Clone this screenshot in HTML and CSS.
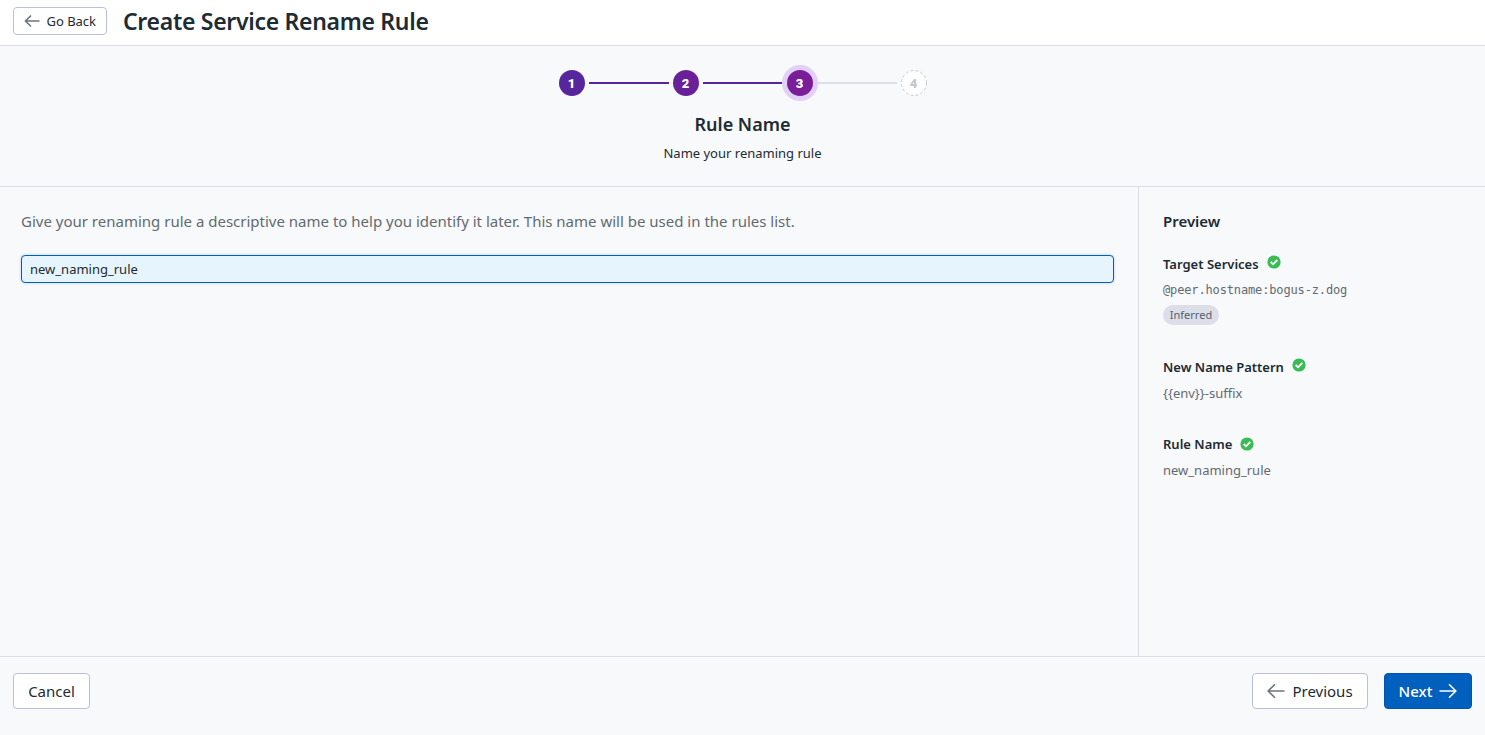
FILE: index.html
```html
<!DOCTYPE html>
<html lang="en">
<head>
<meta charset="utf-8">
<title>Create Service Rename Rule</title>
<link rel="stylesheet" href="styles.css">
</head>
<body>
<header class="topbar">
  <button class="btn btn-small"><svg class="arrow" width="16" height="14" viewBox="0 0 16 14"><path d="M7 1.500 1.500 7 7 12.500M1.500 7h14"/></svg><span>Go Back</span></button>
  <h1 class="title">Create Service Rename Rule</h1>
</header>
<section class="stepper">
  <div class="steps">
    <span class="step step-one">1</span><span class="line"></span>
    <span class="step step-two">2</span><span class="line"></span>
    <span class="step step-current">3</span><span class="line line-pending"></span>
    <span class="step step-pending"><svg class="dash" width="26" height="26" viewBox="0 0 26 26"><circle cx="13" cy="13" r="12.500"/></svg><span class="step-number">4</span></span>
  </div>
  <h2 class="step-title">Rule Name</h2>
  <p class="step-desc">Name your renaming rule</p>
</section>
<main class="content">
  <section class="form">
    <p class="help">Give your renaming rule a descriptive name to help you identify it later. This name will be used in the rules list.</p>
    <input class="field" type="text" value="new_naming_rule">
  </section>
  <aside class="preview">
    <h3 class="preview-title">Preview</h3>
    <div class="item item-target">
      <h4 class="label"><span>Target Services</span><svg class="check check-raised" width="14" height="14" viewBox="0 0 14 14"><circle cx="7" cy="7" r="6.600"/><path d="m3.700 7 2.300 2.300 4.300-4.300"/></svg></h4>
      <p class="value mono">@peer.hostname:bogus-z.dog</p>
      <span class="pill">Inferred</span>
    </div>
    <div class="item item-pattern">
      <h4 class="label"><span>New Name Pattern</span><svg class="check check-raised" width="14" height="14" viewBox="0 0 14 14"><circle cx="7" cy="7" r="6.600"/><path d="m3.700 7 2.300 2.300 4.300-4.300"/></svg></h4>
      <p class="value">{{env}}-suffix</p>
    </div>
    <div class="item">
      <h4 class="label"><span>Rule Name</span><svg class="check" width="14" height="14" viewBox="0 0 14 14"><circle cx="7" cy="7" r="6.600"/><path d="m3.700 7 2.300 2.300 4.300-4.300"/></svg></h4>
      <p class="value">new_naming_rule</p>
    </div>
  </aside>
</main>
<footer class="footer">
  <button class="btn btn-cancel">Cancel</button>
  <div class="nav">
    <button class="btn btn-prev"><svg class="arrow" width="18" height="16" viewBox="0 0 18 16"><path d="M8 1.200 1.200 8 8 14.800M1.200 8h16.300"/></svg><span>Previous</span></button>
    <button class="btn btn-next"><span>Next</span><svg class="arrow" width="18" height="16" viewBox="0 0 18 16"><path d="M10 1.200 16.800 8 10 14.800M16.800 8H.500"/></svg></button>
  </div>
</footer>
</body>
</html>
```
FILE: styles.css
```css
* { box-sizing: border-box; }
body {
  margin: 0;
  height: 735px;
  display: flex;
  flex-direction: column;
  overflow: hidden;
  background: #f8f9fb;
  color: #1c2b34;
  font-family: "Noto Sans", sans-serif;
  font-size: 13px;
  white-space: nowrap;
}
h1, h2, h3, h4, p { margin: 0; }
svg { display: block; flex: none; }
.topbar {
  height: 46px;
  display: flex;
  align-items: flex-start;
  gap: 16px;
  padding: 7px 13px 0;
  background: #fff;
  border-bottom: 1px solid #dcdfe9;
}
.title { font-size: 23px; line-height: 28px; font-weight: 600; letter-spacing: -0.3px; }
.btn {
  display: flex;
  align-items: center;
  justify-content: center;
  height: 36px;
  padding: 0;
  border: 1px solid #bac0dc;
  border-radius: 4px;
  background: #fff;
  color: #1c2b34;
  font: 15px/20px "Noto Sans", sans-serif;
  gap: 7px;
}
.btn-small { width: 94px; height: 28px; font-size: 13px; gap: 6.500px; }
.arrow { fill: none; stroke: #6c757c; stroke-width: 1.6; }
.stepper {
  height: 141px;
  display: flex;
  flex-direction: column;
  align-items: center;
  padding-top: 24px;
  border-bottom: 1px solid #dcdfe9;
}
.steps { display: flex; align-items: center; gap: 4px; }
.step {
  position: relative;
  display: flex;
  align-items: center;
  justify-content: center;
  width: 26px;
  height: 26px;
  padding-top: 1px;
  border-radius: 50%;
  color: #fff;
  font: 900 13px/16px Roboto, sans-serif;
}
.step-one { background: #57259c; }
.step-two { background: #69219a; }
.step-current { background: #791d99; box-shadow: 0 0 0 5px #e3d0f8; }
.step-pending { background: #fff; color: #c5c7ca; }
.step-number { position: relative; }
.dash { position: absolute; left: 0; top: 0; fill: none; stroke: #c8c8cb; stroke-dasharray: 3 2; }
.line { width: 80px; height: 2px; background: #57259c; }
.line-pending { background: #dcdfe9; }
.step-title { margin-top: 15px; font-size: 18px; line-height: 26px; font-weight: 600; }
.step-desc { margin-top: 7px; line-height: 18px; }
.content { flex: 1; display: flex; }
.form { flex: 1; padding: 24px 24px 0 21px; }
.help { font-size: 15px; line-height: 20px; color: #626b71; }
.field {
  display: block;
  width: 100%;
  height: 28px;
  margin-top: 24px;
  padding: 0 8px;
  border: 1px solid #0060b8;
  border-radius: 4px;
  outline: none;
  background: #e6f5fd;
  box-shadow: 0 0 3px rgba(0, 96, 184, .25);
  color: #1c2b34;
  font: 13px/18px "Noto Sans", sans-serif;
}
.preview { width: 347px; padding: 24px 24px 0; border-left: 1px solid #dcdfe9; }
.preview-title { font-size: 15px; line-height: 20px; font-weight: 600; }
.item { margin-bottom: 31px; }
.item-target { margin-top: 23px; margin-bottom: 32px; }
.label { display: flex; align-items: center; gap: 8px; font-size: 13px; line-height: 20px; font-weight: 600; }
.check circle { fill: #38bd55; }
.check path { fill: none; stroke: #fff; stroke-width: 1.8; }
.check-raised { margin-bottom: 4px; }
.value { margin-top: 6px; line-height: 20px; color: #626b71; }
.mono { font-family: "DejaVu Sans Mono", monospace; font-size: 12px; letter-spacing: -0.14px; }
.pill {
  display: flex;
  align-items: center;
  justify-content: center;
  width: 56px;
  height: 20px;
  margin-top: 5px;
  padding-bottom: 1px;
  border-radius: 10px;
  background: #dcdfe9;
  color: #585f6b;
  font-size: 11px;
}
.footer {
  height: 79px;
  display: flex;
  justify-content: space-between;
  padding: 16px 13px 0;
  border-top: 1px solid #dcdfe9;
}
.nav { display: flex; gap: 16px; }
.btn-cancel { width: 77px; }
.btn-prev { width: 116px; }
.btn-next { width: 88px; background: #0060bd; border-color: #0051b5; color: #fff; font-weight: 500; }
.btn-next .arrow { stroke: #fff; }
```
